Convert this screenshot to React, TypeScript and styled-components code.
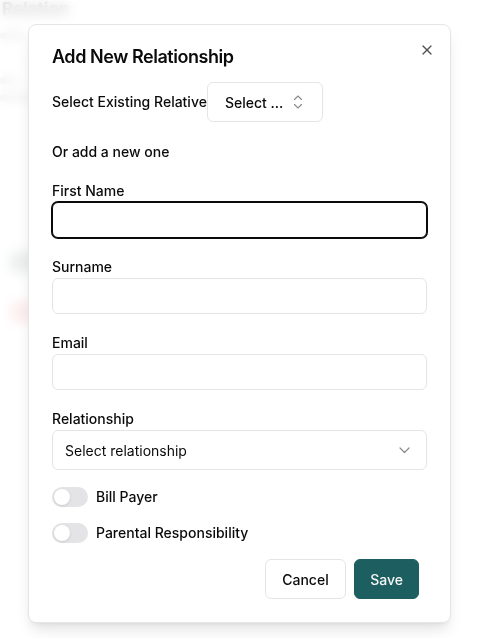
import styled, { createGlobalStyle } from 'styled-components';

const GlobalStyle = createGlobalStyle`
  html, body {
    margin: 0;
    padding: 0;
    background: #ffffff;
  }
  body {
    font-family: Inter, "Noto Sans", sans-serif;
    color: #0a0a0a;
  }
  * {
    box-sizing: border-box;
  }
`;

const INK = '#0a0a0a';
const LINE = '#e5e5e5';
const TEAL = '#1d5f61';

const XIcon = () => (
  <svg width="16" height="16" viewBox="0 0 24 24" fill="none" stroke="currentColor" strokeWidth="2" strokeLinecap="round" strokeLinejoin="round">
    <path d="M18 6 6 18" />
    <path d="m6 6 12 12" />
  </svg>
);

const UpDownIcon = () => (
  <svg width="10" height="14" viewBox="0 0 10 14" fill="none" stroke="currentColor" strokeWidth="1.1" strokeLinecap="round" strokeLinejoin="round">
    <path d="M1.5 4.5 5 1l3.5 3.5" />
    <path d="M1.5 9.5 5 13l3.5-3.5" />
  </svg>
);

const DownIcon = () => (
  <svg width="11" height="7" viewBox="0 0 11 7" fill="none" stroke="currentColor" strokeWidth="1.2" strokeLinecap="round" strokeLinejoin="round">
    <path d="m1 1 4.5 4.5L10 1" />
  </svg>
);

function App() {
  return (
    <>
      <GlobalStyle />
      <Page>
        <PageTitle>Relation</PageTitle>
        <PageLine $width={26} $top={14} />
        <PageLine $width={18} $top={38} />
        <PageLine $width={60} $top={10} />
        <PageChip $color="#9aa7a6" $top={150} />
        <PageChip $color="#f2a3a3" $top={28} />
      </Page>

      <Backdrop>
        <Dialog>
          <CloseButton aria-label="Close">
            <XIcon />
          </CloseButton>

          <Title>Add New Relationship</Title>

          <ExistingRow>
            <InlineLabel>Select Existing Relative</InlineLabel>
            <SmallSelect>
              <span>Select ...</span>
              <Muted>
                <UpDownIcon />
              </Muted>
            </SmallSelect>
          </ExistingRow>

          <Hint>Or add a new one</Hint>

          <Fields>
            <Field>
              <Label>First Name</Label>
              <Input $active />
            </Field>
            <Field>
              <Label>Surname</Label>
              <Input />
            </Field>
            <Field>
              <Label>Email</Label>
              <Input />
            </Field>
            <Field>
              <Label>Relationship</Label>
              <SelectBox>
                <span>Select relationship</span>
                <Muted>
                  <DownIcon />
                </Muted>
              </SelectBox>
            </Field>
          </Fields>

          <Toggles>
            <ToggleRow>
              <Track>
                <Thumb />
              </Track>
              <Label>Bill Payer</Label>
            </ToggleRow>
            <ToggleRow>
              <Track>
                <Thumb />
              </Track>
              <Label>Parental Responsibility</Label>
            </ToggleRow>
          </Toggles>

          <Footer>
            <Button>Cancel</Button>
            <Button $primary>Save</Button>
          </Footer>
        </Dialog>
      </Backdrop>
    </>
  );
}

const Page = styled.div`
  min-height: 638px;
  display: flex;
  flex-direction: column;
  align-items: flex-start;
  overflow: hidden;
`;

const PageTitle = styled.h1`
  margin: 0 0 0 2px;
  font-size: 17px;
  line-height: 18px;
  font-weight: 700;
  color: #2a2a2a;
`;

const PageLine = styled.div<{ $width: number; $top: number }>`
  width: ${(p) => p.$width}px;
  height: 7px;
  margin-top: ${(p) => p.$top}px;
  border-radius: 4px;
  background: #b5b5b5;
`;

const PageChip = styled.div<{ $color: string; $top: number }>`
  width: 40px;
  height: 22px;
  margin: ${(p) => p.$top}px 0 0 10px;
  border-radius: 6px;
  background: ${(p) => p.$color};
`;

const Backdrop = styled.div`
  position: fixed;
  inset: 0;
  background: rgba(255, 255, 255, 0.82);
  backdrop-filter: blur(6px);
`;

const Dialog = styled.div`
  position: absolute;
  top: 24px;
  left: 28px;
  width: 423px;
  padding: 23px;
  background: #ffffff;
  border: 1px solid ${LINE};
  border-radius: 8px;
  box-shadow: 0 10px 15px -3px rgba(0, 0, 0, 0.1), 0 4px 6px -4px rgba(0, 0, 0, 0.1);
  display: flex;
  flex-direction: column;
`;

const CloseButton = styled.button`
  position: absolute;
  top: 17px;
  right: 15px;
  padding: 0;
  border: none;
  background: none;
  display: flex;
  color: ${INK};
  opacity: 0.7;
  cursor: pointer;
`;

const Title = styled.h2`
  margin: 0;
  font-size: 18px;
  line-height: 18px;
  font-weight: 600;
  letter-spacing: -0.45px;
`;

const ExistingRow = styled.div`
  display: flex;
  align-items: center;
  margin-top: 16px;
`;

const InlineLabel = styled.span`
  font-size: 14px;
  line-height: 20px;
  font-weight: 500;
`;

const SmallSelect = styled.button`
  height: 40px;
  padding: 0 19px 0 17px;
  display: flex;
  align-items: center;
  gap: 10px;
  border: 1px solid ${LINE};
  border-radius: 6px;
  background: #ffffff;
  font-family: inherit;
  font-size: 14px;
  font-weight: 500;
  color: ${INK};
`;

const Muted = styled.span`
  display: flex;
  color: #8a8a8a;
`;

const Hint = styled.p`
  margin: 20px 0 0;
  font-size: 14px;
  line-height: 20px;
  font-weight: 500;
`;

const Fields = styled.div`
  display: flex;
  flex-direction: column;
  gap: 19px;
  margin-top: 19px;
`;

const Field = styled.div`
  display: flex;
  flex-direction: column;
  gap: 1px;
`;

const Label = styled.label`
  font-size: 14px;
  line-height: 20px;
  font-weight: 500;
`;

const Input = styled.input<{ $active?: boolean }>`
  height: 36px;
  width: 100%;
  padding: 0 12px;
  border: 1px solid ${(p) => (p.$active ? INK : LINE)};
  border-radius: 6px;
  box-shadow: ${(p) => (p.$active ? `0 0 0 1px ${INK}` : 'none')};
  font-family: inherit;
  font-size: 14px;
  outline: none;
`;

const SelectBox = styled.button`
  height: 40px;
  width: 100%;
  padding: 0 16px 0 12px;
  display: flex;
  align-items: center;
  justify-content: space-between;
  border: 1px solid ${LINE};
  border-radius: 6px;
  background: #ffffff;
  font-family: inherit;
  font-size: 14px;
  color: ${INK};
`;

const Toggles = styled.div`
  display: flex;
  flex-direction: column;
  gap: 16px;
  margin-top: 17px;
`;

const ToggleRow = styled.div`
  display: flex;
  align-items: center;
  gap: 8px;
`;

const Track = styled.span`
  width: 36px;
  height: 20px;
  padding: 2px;
  border-radius: 999px;
  background: #e4e4e7;
  display: flex;
  align-items: center;
`;

const Thumb = styled.span`
  width: 16px;
  height: 16px;
  border-radius: 50%;
  background: #ffffff;
  box-shadow: 0 1px 3px rgba(0, 0, 0, 0.12);
`;

const Footer = styled.div`
  display: flex;
  justify-content: flex-end;
  gap: 8px;
  margin-top: 16px;
  padding-right: 8px;
`;

const Button = styled.button<{ $primary?: boolean }>`
  height: 40px;
  padding: ${(p) => (p.$primary ? '0 15px' : '0 16.5px')};
  border-radius: 6px;
  border: 1px solid ${(p) => (p.$primary ? TEAL : LINE)};
  background: ${(p) => (p.$primary ? TEAL : '#ffffff')};
  color: ${(p) => (p.$primary ? '#f5f5f5' : INK)};
  font-family: inherit;
  font-size: 14px;
  font-weight: 500;
  cursor: pointer;
`;

export default App;
